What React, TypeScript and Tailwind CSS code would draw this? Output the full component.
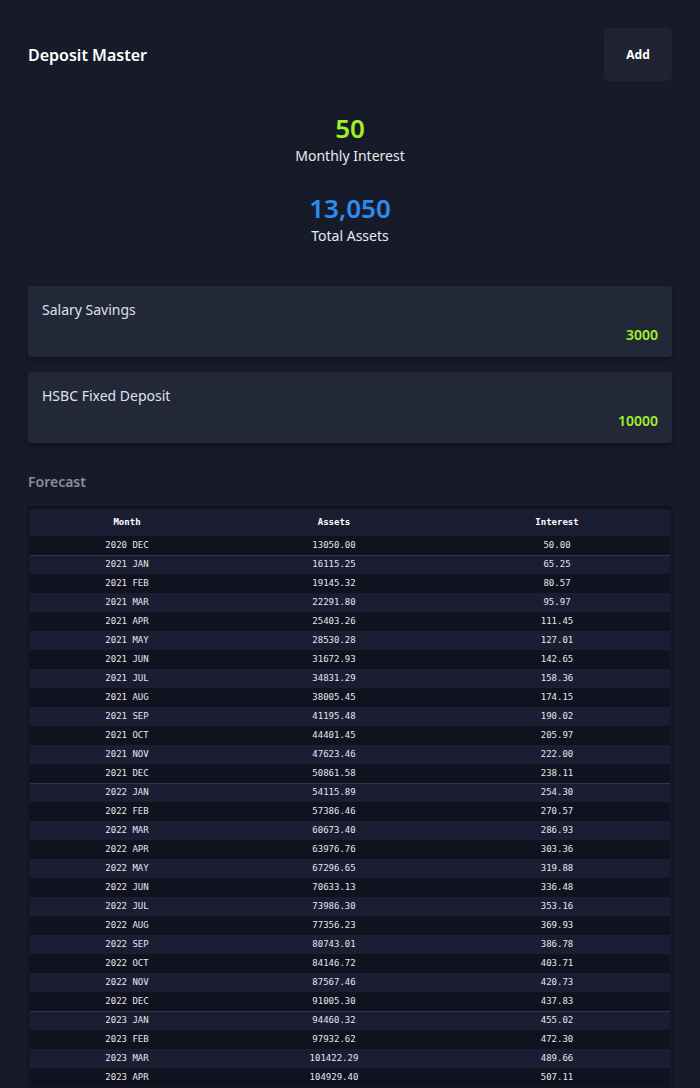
import React from 'react';

const rows: [string, string, string][] = [
    ['2020 DEC', '13050.00', '50.00'],
    ['2021 JAN', '16115.25', '65.25'],
    ['2021 FEB', '19145.32', '80.57'],
    ['2021 MAR', '22291.80', '95.97'],
    ['2021 APR', '25403.26', '111.45'],
    ['2021 MAY', '28530.28', '127.01'],
    ['2021 JUN', '31672.93', '142.65'],
    ['2021 JUL', '34831.29', '158.36'],
    ['2021 AUG', '38005.45', '174.15'],
    ['2021 SEP', '41195.48', '190.02'],
    ['2021 OCT', '44401.45', '205.97'],
    ['2021 NOV', '47623.46', '222.00'],
    ['2021 DEC', '50861.58', '238.11'],
    ['2022 JAN', '54115.89', '254.30'],
    ['2022 FEB', '57386.46', '270.57'],
    ['2022 MAR', '60673.40', '286.93'],
    ['2022 APR', '63976.76', '303.36'],
    ['2022 MAY', '67296.65', '319.88'],
    ['2022 JUN', '70633.13', '336.48'],
    ['2022 JUL', '73986.30', '353.16'],
    ['2022 AUG', '77356.23', '369.93'],
    ['2022 SEP', '80743.01', '386.78'],
    ['2022 OCT', '84146.72', '403.71'],
    ['2022 NOV', '87567.46', '420.73'],
    ['2022 DEC', '91005.30', '437.83'],
    ['2023 JAN', '94460.32', '455.02'],
    ['2023 FEB', '97932.62', '472.30'],
    ['2023 MAR', '101422.29', '489.66'],
    ['2023 APR', '104929.40', '507.11'],
];

const deposits = [
    { name: 'Salary Savings', amount: '3000' },
    { name: 'HSBC Fixed Deposit', amount: '10000' },
];

const App = () => {
    return (
        <div className="min-h-screen bg-[#171b29] px-7 pt-7 pb-4 text-white font-['Noto_Sans',sans-serif]">
            {/* Header */}
            <div className="flex items-center justify-between">
                <h1 className="text-base font-semibold">Deposit Master</h1>
                <button className="w-[68px] h-[53px] rounded-md bg-[#1f2333] text-xs font-bold text-white">
                    Add
                </button>
            </div>

            {/* Summary */}
            <div className="mt-[31px] flex flex-col items-center">
                <div className="text-[26px] leading-8 font-semibold text-[#a3f02a]">50</div>
                <div className="mt-[2px] text-sm leading-5 text-[#e8eaf0]">Monthly Interest</div>
                <div className="mt-[26px] text-[26px] leading-8 font-semibold text-[#2b8cf2]">13,050</div>
                <div className="mt-[2px] text-sm leading-5 text-[#e8eaf0]">Total Assets</div>
            </div>

            {/* Deposits */}
            <div className="mt-10 flex flex-col gap-[15px]">
                {deposits.map((d, idx) => (
                    <div
                        key={idx}
                        className="rounded-[3px] bg-[#222838] px-[14px] pt-[14px] pb-3 shadow-[0_2px_4px_rgba(0,0,0,0.45)]"
                    >
                        <div className="text-sm leading-5 text-[#dfe2ea]">{d.name}</div>
                        <div className="mt-[5px] text-right text-sm leading-5 font-semibold text-[#a3f02a]">{d.amount}</div>
                    </div>
                ))}
            </div>

            {/* Forecast */}
            <h2 className="mt-[29px] text-sm leading-5 font-semibold text-[#8a8e99]">Forecast</h2>

            <div className="mt-4 rounded-[3px] bg-[#151829] p-[2px] shadow-[0_-1px_2px_rgba(0,0,0,0.6)] font-['DejaVu_Sans_Mono',monospace] text-[9px] text-[#e3e6ee]">
                <div className="grid grid-cols-[194px_220px_1fr] h-[26px] items-center bg-[#1b1e33] font-bold text-white">
                    <div className="text-center">Month</div>
                    <div className="text-center">Assets</div>
                    <div className="text-center">Interest</div>
                </div>
                {rows.map((r, idx) => (
                    <div
                        key={idx}
                        className={`grid grid-cols-[194px_220px_1fr] h-[19px] items-center ${idx % 2 === 1 ? 'bg-[#1b1e33]' : 'bg-[#10131f]'} ${r[0].endsWith('JAN') ? 'border-t border-[#2c3850]' : ''}`}
                    >
                        <div className="text-center">{r[0]}</div>
                        <div className="text-center">{r[1]}</div>
                        <div className="text-center">{r[2]}</div>
                    </div>
                ))}
            </div>
        </div>
    );
};

export default App;
